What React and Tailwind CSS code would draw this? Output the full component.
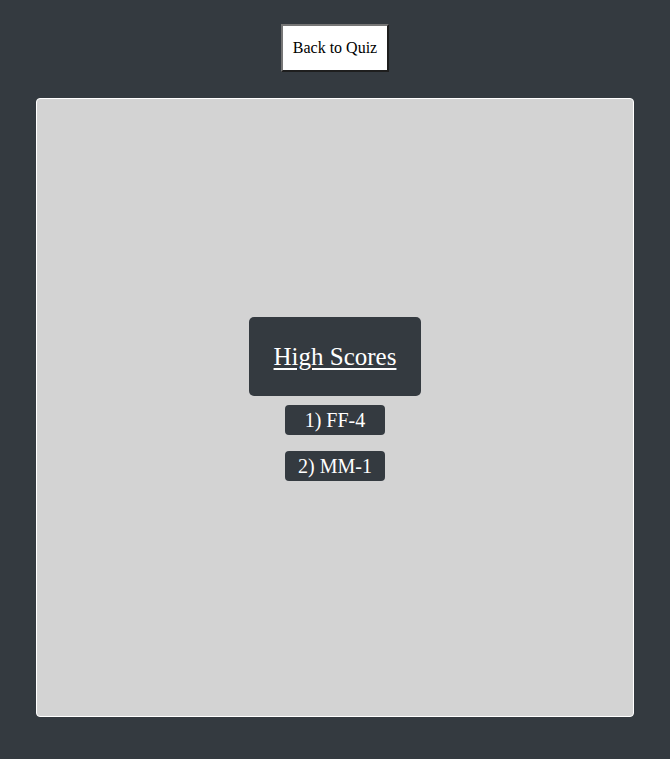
import React from 'react';

const scores = ['1) FF-4', '2) MM-1'];

export default function App() {
  return (
    <div className="min-h-[759px] bg-[#343a40] flex flex-col items-center pt-6 px-9 pb-[42px] font-['Liberation_Serif',serif]">
      {/* back button */}
      <button className="w-[108px] h-12 bg-white text-black text-base border-2 border-t-[#767676] border-l-[#767676] border-b-[#1e1e1e] border-r-[#1e1e1e]">
        Back to Quiz
      </button>

      {/* scores panel */}
      <div className="mt-[26px] w-full h-[619px] bg-[#d3d3d3] border border-white rounded flex flex-col items-center pt-[218px]">
        <div className="w-[172px] h-[79px] bg-[#343a40] rounded-[5px] flex items-center justify-center">
          <h2 className="text-white text-[25px] underline underline-offset-[3px]">High Scores</h2>
        </div>
        <div className="mt-[9px] flex flex-col gap-4">
          {scores.map((s) => (
            <div key={s} className="w-[100px] h-[30px] bg-[#343a40] rounded flex items-center justify-center text-white text-[20px]">
              {s}
            </div>
          ))}
        </div>
      </div>
    </div>
  );
}
